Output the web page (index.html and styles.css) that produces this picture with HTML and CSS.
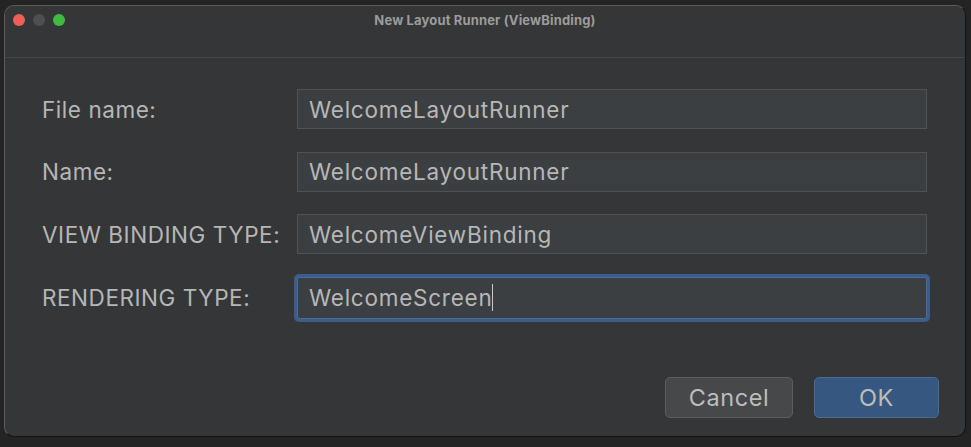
FILE: index.html
```html
<!DOCTYPE html>
<html>
<head>
<meta charset="utf-8">
<link rel="stylesheet" href="styles.css">
</head>
<body>
<div class="window">
  <div class="titlebar">
    <div class="lights">
      <span class="light red"></span>
      <span class="light gray"></span>
      <span class="light green"></span>
    </div>
    <div class="title">New Layout Runner (ViewBinding)</div>
  </div>
  <div class="content">
    <div class="form">
      <div class="row">
        <label class="label">File name:</label>
        <div class="field">WelcomeLayoutRunner</div>
      </div>
      <div class="row">
        <label class="label">Name:</label>
        <div class="field">WelcomeLayoutRunner</div>
      </div>
      <div class="row">
        <label class="label">VIEW BINDING TYPE:</label>
        <div class="field">WelcomeViewBinding</div>
      </div>
      <div class="row">
        <label class="label">RENDERING TYPE:</label>
        <div class="field focused">WelcomeScreen<span class="caret"></span></div>
      </div>
    </div>
    <div class="buttons">
      <button class="btn cancel">Cancel</button>
      <button class="btn ok">OK</button>
    </div>
  </div>
</div>
</body>
</html>
```
FILE: styles.css
```css
html, body {
  margin: 0;
  padding: 0;
}
body {
  width: 971px;
  height: 447px;
  background: #242424;
  overflow: hidden;
  font-family: Inter, "Liberation Sans", sans-serif;
}
.window {
  box-sizing: border-box;
  margin: 5px 0 0 4px;
  width: 962px;
  height: 432px;
  background: #353638;
  border: 1px solid #5b5b5d;
  border-right-color: #111;
  border-bottom-color: #111;
  border-radius: 10px;
  display: flex;
  flex-direction: column;
  overflow: hidden;
}
.titlebar {
  position: relative;
  height: 51px;
  border-bottom: 1px solid #444547;
  background: #353638;
  display: flex;
  align-items: flex-start;
  justify-content: center;
}
.lights {
  position: absolute;
  left: 8px;
  top: 8px;
  display: flex;
  gap: 8px;
}
.light {
  width: 12px;
  height: 12px;
  border-radius: 50%;
}
.red { background: #ee5f57; }
.gray { background: #4e4f51; }
.green { background: #3fbc3f; }
.title {
  margin-top: 6px;
  font-size: 13px;
  font-weight: 700;
  color: #9c9c9c;
  letter-spacing: 0.15px;
}
.content {
  flex: 1;
  display: flex;
  flex-direction: column;
  padding: 31px 38px 18px 37px;
}
.form {
  display: flex;
  flex-direction: column;
  gap: 22.5px;
}
.row {
  display: flex;
  align-items: center;
}
.label {
  width: 255px;
  flex: none;
  font-size: 22.5px;
  letter-spacing: 0.55px;
  color: #b6b6b6;
}
.field {
  flex: 1;
  box-sizing: border-box;
  height: 40px;
  background: #3c3f41;
  border: 1px solid #505254;
  padding: 0 11px;
  display: flex;
  align-items: center;
  font-size: 22.5px;
  letter-spacing: 0.75px;
  color: #b7b7b7;
}
.field.focused {
  border-color: #4a6d9c;
  box-shadow: 0 0 0 3px #3d5d89;
  border-radius: 2px;
  height: 42px;
}
.caret {
  display: inline-block;
  width: 1px;
  height: 27px;
  background: #c8c8c8;
  margin-left: 0;
}
.buttons {
  margin-top: auto;
  display: flex;
  justify-content: flex-end;
  gap: 21px;
  margin-right: -12px;
}
.btn {
  box-sizing: border-box;
  height: 41px;
  border-radius: 5px;
  font-family: Inter, "Liberation Sans", sans-serif;
  font-size: 23.5px;
  letter-spacing: 0.6px;
  color: #bdbdbd;
  padding: 0;
}
.cancel {
  width: 128px;
  background: #46484a;
  border: 1px solid #5c5e60;
}
.ok {
  width: 125px;
  background: #365880;
  border: 1px solid #4b6d95;
}
```
